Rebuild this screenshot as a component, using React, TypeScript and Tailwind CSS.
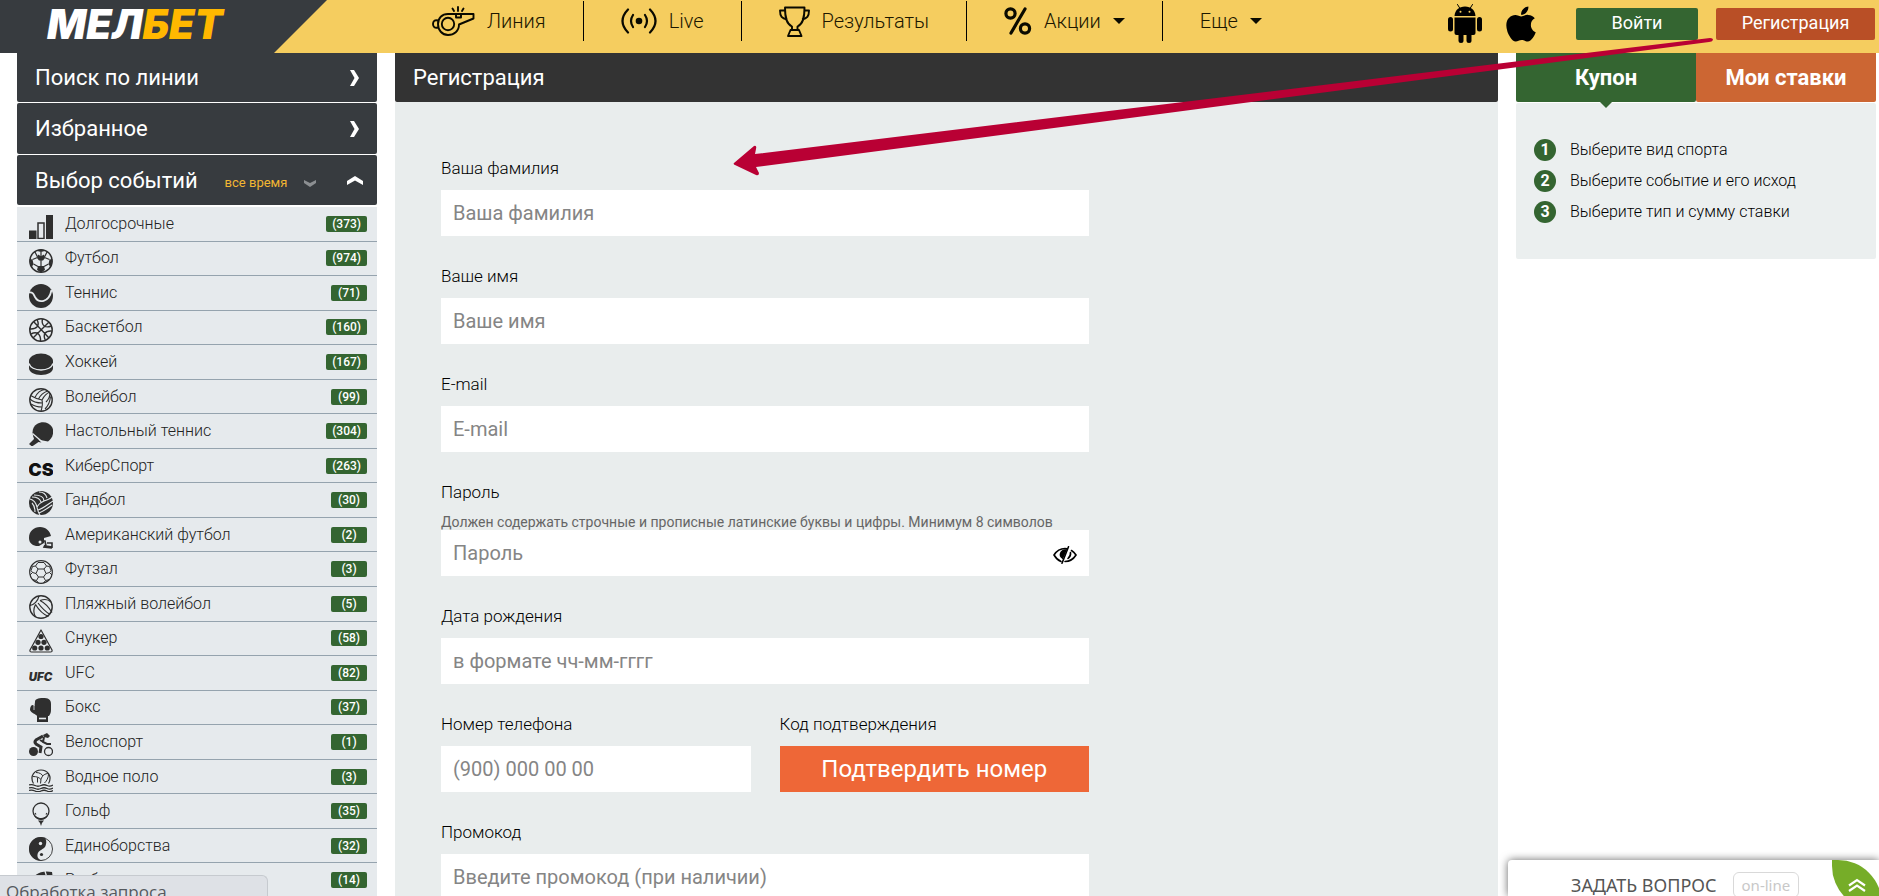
import type { ReactNode } from "react";
import { FaApple } from "react-icons/fa";

const INK = "#2f2f2f";

function Icon({ children }: { children: ReactNode }) {
  return (
    <svg viewBox="0 0 24 24" className="mt-[6px] h-6 w-6 shrink-0" fill={INK} stroke="none" aria-hidden="true">
      {children}
    </svg>
  );
}

const line = { fill: "none", stroke: INK, strokeWidth: 1.2 };
const cut = { fill: "none", stroke: "#e6eaed", strokeWidth: 1.3 };

const sports: { name: string; count: number; icon: ReactNode }[] = [
  {
    name: "Долгосрочные",
    count: 373,
    icon: (
      <>
        <path d="M0 15.500h7.500V24H0zM17 0h7v24h-7z" />
        <rect x="9" y="8" width="6" height="15.500" fill="none" stroke={INK} strokeWidth="1.500" />
      </>
    ),
  },
  {
    name: "Футбол",
    count: 974,
    icon: (
      <>
        <circle cx="12" cy="12" r="11.200" {...line} strokeWidth={1.5} />
        <path d="M9 5.500l3 1.800 3-1.800 1 3.500-2 2.500h-4l-2-2.500z" />
        <path d="M9 17h6l1 4-4 2.500L8 21zM6.500 1.500L12 3l5.500-1.500-5.500-1zM0.500 10l3 .5 1 4.500-2 3.500zM23.500 10l-3 .5-1 4.500 2 3.500z" />
        <path d="M12 3v5M3.500 10.500l5-2M20.500 10.500l-5-2M4.500 15l4.500 2.500M19.500 15L15 17.500M12 11v6M6 3l2.500 5M18 3l-2.500 5" {...line} />
      </>
    ),
  },
  {
    name: "Теннис",
    count: 71,
    icon: (
      <>
        <circle cx="12" cy="12" r="12" />
        <path d="M0 8.500c3.500-1 4.500 1.500 6 4.500 3.500 6.500 14 6 16.500-7" {...cut} strokeWidth={1.8} />
      </>
    ),
  },
  {
    name: "Баскетбол",
    count: 160,
    icon: (
      <>
        <circle cx="12" cy="12" r="11.200" {...line} strokeWidth={1.5} />
        <path d="M4.500 3.500L20 20M20 4L4 20M8 1.500c3 6 0 10-7.500 9.500M2 16c6-3 10 0 9.500 7.500M13.500 1C12 7 16 10.500 22.500 8M22.800 13c-7-.5-9 4-6.500 9" {...line} strokeWidth={1.4} />
      </>
    ),
  },
  {
    name: "Хоккей",
    count: 167,
    icon: (
      <>
        <path d="M0 8v7c0 4 5 7 12 7s12-3 12-7V8z" />
        <ellipse cx="12" cy="8" rx="12" ry="7.500" />
        <path d="M0 10.500c1 4 6 6.500 12 6.500s11-2.500 12-6.500" {...cut} />
      </>
    ),
  },
  {
    name: "Волейбол",
    count: 99,
    icon: (
      <>
        <circle cx="12" cy="12" r="11.200" {...line} strokeWidth={1.4} />
        <path d="M13 12C8 11 4 9 1.500 7.500M13 12c2-4 5-7 8-8M13 12c1 4 0 8-1 11M1 11c3 3 7 4 12 4M2 16c3 2 7 3 11 3M6 9.500C8 5 12 2 16 1.500M9.500 11c2-4 5-6.500 9-8M17 14c3-3 4-6 4-9M16 21c3-3 5-7 5.500-12.500" {...line} strokeWidth={1.1} />
      </>
    ),
  },
  {
    name: "Настольный теннис",
    count: 304,
    icon: (
      <>
        <path d="M6 17C2 12 3 5 8 2s12-2 15 3 0 12-4 14.500z" />
        <path d="M4 12.500l8.500 8-3-.5L3 24.500 0 22l5-5z" />
        <path d="M3.500 11.500l10.500 9" {...cut} />
      </>
    ),
  },
  {
    name: "КиберСпорт",
    count: 263,
    icon: (
      <text x="12" y="19" textAnchor="middle" fontFamily="Inter, sans-serif" fontWeight="900" fontSize="18" fill="#111">
        CS
      </text>
    ),
  },
  {
    name: "Гандбол",
    count: 30,
    icon: (
      <>
        <circle cx="12" cy="12" r="12" />
        <path d="M1 8c4 1 6 4 7 8 .5 3 1 5 3 8M5 4c6 0 10 2 10 6-3 1-5 3-7 6M15 10c3-1 6-2 8-4M10 1c4 0 7 2 8 6M9 19c4-1 9-5 15-9M10 22c5-2 9-5 13-8M3 12c2 2 3 5 3 9M3 6c5 0 8 2 9 5" {...cut} strokeWidth={1.1} />
      </>
    ),
  },
  {
    name: "Американский футбол",
    count: 2,
    icon: (
      <>
        <path d="M0 12C0 5 5 1 11 1c6 0 10 4 11 9l-7 2v5l-5 3H7l-3-1c-3-2-4-4-4-7z" />
        <circle cx="11" cy="16" r="1.500" fill="#e6eaed" />
        <path d="M13 15h3l1 5 6 1v-4h-5M16 19l-1 2 8 1" {...line} strokeWidth={1.6} />
      </>
    ),
  },
  {
    name: "Футзал",
    count: 3,
    icon: (
      <>
        <circle cx="12" cy="12" r="11.300" {...line} />
        <path d="M9 9h6l2 4.500-2.500 3.500h-5L7 13.500zM9 9L6.500 6 9 2.500h6L17.500 6 15 9M17 13.500l3.500-1L23 15M17.500 6l3 .5 1.500 4-1.500 2M7 13.500l-3.500-1L1 15M6.500 6l-3 .5L2 10.500l1.500 2M9.500 17l-2 3.500L9.500 23M14.500 17l2 3.500-2 2.500M7.500 20.500l-4-1M16.500 20.500l4-1" {...line} strokeWidth={1} />
      </>
    ),
  },
  {
    name: "Пляжный волейбол",
    count: 5,
    icon: (
      <>
        <circle cx="12" cy="12" r="11.200" {...line} strokeWidth={1.4} />
        <path d="M1 10.500C5 10 9 6 10 1M11 5.500c4 2 9 7 12 12M6.500 9.500c3 5 8 10 13 12M9 8c3 4 8 9 12 11.500M6.500 9.500c-2 4-2 9 0 12.500M11 5.500c4-1.500 8-1.500 11 1.500" {...line} strokeWidth={1.2} />
      </>
    ),
  },
  {
    name: "Снукер",
    count: 58,
    icon: (
      <>
        <path d="M12 1L23 21q.5 2-1.500 2h-19Q.5 23 1 21z" {...line} strokeLinejoin="round" />
        <circle cx="12" cy="7.500" r="2.600" />
        <circle cx="9" cy="13.300" r="2.600" />
        <circle cx="15" cy="13.300" r="2.600" />
        <circle cx="5.700" cy="19" r="2.600" />
        <circle cx="12" cy="19" r="2.600" />
        <circle cx="18.300" cy="19" r="2.600" />
      </>
    ),
  },
  {
    name: "UFC",
    count: 82,
    icon: (
      <text x="11.500" y="17" textAnchor="middle" fontFamily="Inter, sans-serif" fontWeight="900" fontStyle="italic" fontSize="11.500" fill={INK}>
        UFC
      </text>
    ),
  },
  {
    name: "Бокс",
    count: 37,
    icon: (
      <>
        <path d="M6 4c0-3 3-4 8-4s8 1 8 6v6c0 3-1 4-2 6H8c-1-2-6-3-7-6 0-3 1-5 3-5l1.500 1z" />
        <path d="M8 18h11v6H8z" />
        <path d="M10 20.500h7" {...cut} strokeWidth={1.6} />
        <path d="M5 7v5" {...cut} strokeWidth={0.8} />
      </>
    ),
  },
  {
    name: "Велоспорт",
    count: 1,
    icon: (
      <>
        <circle cx="4.500" cy="18.500" r="4.500" />
        <circle cx="19.500" cy="18.500" r="4" {...line} strokeWidth={1.3} />
        <path d="M14 2l4-2 3 3-2 2-4-1z" />
        <path d="M14 3L7 7q-2 2 0 4l5 3-1 6" fill="none" stroke={INK} strokeWidth="3" />
        <path d="M15 4l-1 5 4 2h4M11 7l5 3" fill="none" stroke={INK} strokeWidth="2" />
      </>
    ),
  },
  {
    name: "Водное поло",
    count: 3,
    icon: (
      <>
        <path d="M4.500 15.500C0 8 6 2 12 2s12 6 7.500 13.500" {...line} />
        <path d="M4 8.500c4 0 6 1 8 3l-.5 4M12 11.500c1-4 4-6 7.500-6M7 4.500c4 0 6 2 7 3.500M15.500 15c2-2 4-5 4-9M8.500 9.500v5" {...line} strokeWidth={1} />
        <path d="M0 17q3-1 6 .5t6 0 6 0 6-.5M0 20q3-1 6 .5t6 0 6 0 6-.5M0 22.500q3-1 6 .5t6 0 6 0 6-.5" {...line} strokeWidth={1.3} />
      </>
    ),
  },
  {
    name: "Гольф",
    count: 35,
    icon: (
      <>
        <circle cx="12" cy="9" r="8" {...line} strokeWidth={1.3} />
        <path d="M4 11c3 4 5 5 8 5s6-2 8-5c-1 4-4 7-8 7s-7-3-8-7zM9 18.500h6l-2 2.500-1 3-1-3z" />
        <path d="M6 11l1 1.500M17 12.500l1-1.500" {...line} />
      </>
    ),
  },
  {
    name: "Единоборства",
    count: 32,
    icon: (
      <>
        <circle cx="12" cy="12" r="11.500" {...line} strokeWidth={0.9} />
        <path d="M16 .7C6-2 0 5 0 12s6 13 15 11.500c-5 0-7-3-6.500-6C9 13 15 12.500 16.500 9 18 5 17 2 16 .7z" />
        <circle cx="11.500" cy="6.500" r="1.700" fill="#e6eaed" />
        <circle cx="12.500" cy="17.500" r="1.600" />
      </>
    ),
  },
  {
    name: "Регби",
    count: 14,
    icon: (
      <>
        <path d="M2 12C4 3 12-1 23 1c2 10-2 19-12 22-7 1-10-3-9-11z" />
        <path d="M16 0l2 7" {...cut} />
      </>
    ),
  },
];

function Whistle() {
  return (
    <svg viewBox="0 0 43 30" className="h-[30px] w-[43px]" fill="none" stroke="#0a0a00" strokeWidth="1.900" strokeLinejoin="round" strokeLinecap="round" aria-hidden="true">
      <circle cx="16" cy="18" r="6.200" />
      <path d="M23 8h18.500v4.500L27 18.500C27 25 22 29 16 29S6 24 6 18 10 8 16 8h8v3.500h5V8" />
      <path d="M6 14.500C3 13.500 1 15 1 18s2 4.500 5 3.500M26 5V1M22 5l-1.500-2.500M30 5l1.500-2.500" />
    </svg>
  );
}

function Broadcast() {
  return (
    <svg viewBox="0 0 36 26" className="h-[26px] w-9" fill="none" stroke="#0a0a00" strokeWidth="2.200" strokeLinecap="round" aria-hidden="true">
      <circle cx="18" cy="13" r="3.300" fill="#0a0a00" stroke="none" />
      <path d="M12 7Q8 13 12 19M24 7q4 6 0 12M7 1.500Q-4 13 7 24.500M29 1.500Q40 13 29 24.500" />
    </svg>
  );
}

function Trophy() {
  return (
    <svg viewBox="0 0 31 31" className="h-[31px] w-[31px]" fill="none" stroke="#0a0a00" strokeWidth="1.900" strokeLinejoin="round" aria-hidden="true">
      <path d="M6 1.500h19.500C25.500 12 24 18 18.500 20.500V24h-5.500v-3.500C7.500 18 6 12 6 1.500z" />
      <path d="M6 4.500H1c0 6 2 8 7 9M25 4.500h5c0 6-2 8-7 9M11.500 24h8.500l2.500 6H9z" />
    </svg>
  );
}

function Percent() {
  return (
    <svg viewBox="0 0 28 28" className="h-7 w-7" fill="none" stroke="#0a0a00" strokeWidth="3.200" strokeLinecap="round" aria-hidden="true">
      <circle cx="6.500" cy="6.500" r="4.600" />
      <circle cx="21" cy="21.500" r="4.600" />
      <path d="M21 2L7 26" />
    </svg>
  );
}

function Caret() {
  return (
    <svg viewBox="0 0 12 6" className="h-[6px] w-3" fill="#0a0a00" aria-hidden="true">
      <path d="M0 0h12L6 6z" />
    </svg>
  );
}

function Android() {
  return (
    <svg viewBox="0 0 34 39" className="h-[39px] w-[34px]" fill="#000" aria-hidden="true">
      <path d="M6.500 12C7 6 11 2.500 17 2.500S27 6 27.500 12z" />
      <path d="M12 4.500L9.500.5M22 4.500L24.500.5" stroke="#000" strokeWidth="1" strokeLinecap="round" />
      <circle cx="12.500" cy="7.800" r="1" fill="#f5cd5f" />
      <circle cx="21.500" cy="7.800" r="1" fill="#f5cd5f" />
      <path d="M6.500 13.500h21V29q0 2-2 2h-17q-2 0-2-2z" />
      <rect x="0" y="13" width="5" height="14.500" rx="2.500" />
      <rect x="29" y="13" width="5" height="14.500" rx="2.500" />
      <rect x="10.500" y="26" width="5" height="13" rx="2.500" />
      <rect x="18.500" y="26" width="5" height="13" rx="2.500" />
    </svg>
  );
}

const navItem = "flex h-10 items-center gap-3 px-[37px] text-xl font-light text-[#1c1700]";

function Header() {
  return (
    <header className="flex h-[53px] shrink-0 bg-[#f5cd5f]">
      <a href="#" className="h-[53px] w-[327px] shrink-0 bg-[#373b3f] pl-[47px] [clip-path:polygon(0_0,100%_0,274px_100%,0_100%)]">
        <span className="font-[Inter,sans-serif] text-[41px] leading-[48px] font-black text-white italic">
          МЕЛ<span className="text-[#ffb800]">БЕТ</span>
        </span>
      </a>
      <nav className="ml-[68px] flex pt-px whitespace-nowrap">
        <a href="#" className={navItem}>
          <Whistle />
          Линия
        </a>
        <a href="#" className={`${navItem} border-l border-black`}>
          <Broadcast />
          Live
        </a>
        <a href="#" className={`${navItem} border-l border-black`}>
          <Trophy />
          Результаты
        </a>
        <button type="button" className={`${navItem} border-l border-black`}>
          <Percent />
          Акции
          <Caret />
        </button>
        <button type="button" className={`${navItem} border-l border-black`}>
          Еще
          <Caret />
        </button>
      </nav>
      <div className="ml-auto flex items-start pr-1">
        <a href="#" aria-label="Android" className="mt-1">
          <Android />
        </a>
        <a href="#" aria-label="iOS" className="mt-1 mr-[36px] ml-[20px]">
          <FaApple className="h-[40px] w-[38px] text-black" />
        </a>
        <button type="button" className="mt-2 h-8 w-[122px] rounded-xs bg-[#346531] pb-[2px] text-lg text-white">
          Войти
        </button>
        <button type="button" className="mt-2 ml-[18px] h-8 w-[159px] rounded-xs bg-[#b94f26] pb-[2px] text-lg text-white">
          Регистрация
        </button>
      </div>
    </header>
  );
}

function ChevronRight() {
  return (
    <svg viewBox="0 0 9 16" className="h-4 w-[9px]" fill="#fff" aria-hidden="true">
      <path d="M0 0h4l5 8-5 8H0l4.500-8z" />
    </svg>
  );
}

const bar = "flex items-center rounded-b-xs bg-[#373b3f] pl-[18px] text-[22px] text-white";

function Sidebar() {
  return (
    <aside className="w-[360px] shrink-0">
      <button type="button" className={`${bar} h-[49px] w-full justify-between pr-[18px]`}>
        Поиск по линии
        <ChevronRight />
      </button>
      <button type="button" className={`${bar} mt-px h-[51px] w-full justify-between rounded-t-xs pr-[18px]`}>
        Избранное
        <ChevronRight />
      </button>
      <div className={`${bar} mt-px h-[50px] rounded-t-xs pr-[14px]`}>
        <h2>Выбор событий</h2>
        <label className="ml-[27px] flex items-center pt-[6px]">
          <span className="sr-only">Период</span>
          <select className="appearance-none bg-transparent text-[13px] leading-5 text-[#f2b632]">
            <option>все время</option>
          </select>
          <svg viewBox="0 0 12 7" className="ml-4 h-[7px] w-3" fill="#8c8f92" aria-hidden="true">
            <path d="M0 0l6 3 6-3v3L6 7 0 3z" />
          </svg>
        </label>
        <svg viewBox="0 0 16 9" className="ml-auto h-[9px] w-4" fill="#fff" aria-hidden="true">
          <path d="M0 9l8-4.500L16 9V5L8 0 0 5z" />
        </svg>
      </div>
      <ul className="mt-[2px] grid h-[691px] auto-rows-fr bg-[#e6eaed]">
        {sports.map((s) => (
          <li key={s.name} className="border-b border-[#95a3ae]">
            <a href="#" className="flex h-full items-center pr-[10px] pl-3">
              <Icon>{s.icon}</Icon>
              <span className="ml-3 text-base font-light text-[#222]">{s.name}</span>
              <span className="ml-auto min-w-9 rounded-xs bg-[#346531] px-[6px] text-center text-xs leading-4 font-medium text-white">
                ({s.count})
              </span>
            </a>
          </li>
        ))}
      </ul>
    </aside>
  );
}

const label = "block h-[62px] pt-[30px] text-[17px] leading-5 font-light text-black";
const field = "block h-[46px] w-full bg-white px-3 text-xl text-[#333] outline-none placeholder:text-[#858585]";

function Field({ id, title, placeholder, type = "text" }: { id: string; title: string; placeholder: string; type?: string }) {
  return (
    <div>
      <label htmlFor={id} className={label}>
        {title}
      </label>
      <input id={id} type={type} placeholder={placeholder} className={field} />
    </div>
  );
}

function Registration() {
  return (
    <main className="flex min-w-0 flex-1 flex-col">
      <h1 className="flex h-[49px] shrink-0 items-center rounded-b-xs bg-[#333] pl-[18px] text-[22px] text-white">Регистрация</h1>
      <form className="flex-1 bg-[#e9eded] px-[46px] pt-[26px]">
        <div className="max-w-[648px]">
          <Field id="surname" title="Ваша фамилия" placeholder="Ваша фамилия" />
          <Field id="name" title="Ваше имя" placeholder="Ваше имя" />
          <Field id="email" title="E-mail" placeholder="E-mail" type="email" />
          <div>
            <label htmlFor="password" className={label}>
              Пароль
            </label>
            <p className="h-4 text-sm leading-4 text-[#666]">
              Должен содержать строчные и прописные латинские буквы и цифры. Минимум 8 символов
            </p>
            <div className="flex items-center bg-white pr-3">
              <input id="password" type="password" placeholder="Пароль" className={field} />
              <button type="button" aria-label="Показать пароль" className="mt-1">
                <svg viewBox="0 0 24 18" className="h-[18px] w-6" fill="none" stroke="#000" strokeWidth="1.600" strokeLinecap="round" aria-hidden="true">
                  <path d="M8 15.500C4.500 14 2.500 11.500 1 9c2.500-4 6-6.500 11-6.500l2 .2M18.500 4.500C20.500 5.700 22 7.500 23 9c-2.500 4-6.500 6.500-11 6.500" />
                  <path d="M15.500.8L9 17.200" />
                  <path d="M13 4L9.500 12C6 10 7 4 13 4z" fill="#000" />
                  <path d="M17.500 6.500Q18 10 15 12.500" />
                </svg>
              </button>
            </div>
          </div>
          <Field id="birth" title="Дата рождения" placeholder="в формате чч-мм-гггг" />
          <div className="grid grid-cols-2 gap-[29px]">
            <Field id="phone" title="Номер телефона" placeholder="(900) 000 00 00" type="tel" />
            <div>
              <label htmlFor="confirm" className={label}>
                Код подтверждения
              </label>
              <button id="confirm" type="button" className="h-[46px] w-full bg-[#ee6737] text-2xl text-white">
                Подтвердить номер
              </button>
            </div>
          </div>
          <Field id="promo" title="Промокод" placeholder="Введите промокод (при наличии)" />
        </div>
      </form>
    </main>
  );
}

const steps = ["Выберите вид спорта", "Выберите событие и его исход", "Выберите тип и сумму ставки"];

function Coupon() {
  return (
    <aside className="w-[360px] shrink-0">
      <div className="grid grid-cols-2 text-[22px] font-bold text-white">
        <button type="button" className="relative h-[49px] rounded-b-xs bg-[#346531]">
          Купон
          <svg viewBox="0 0 12 6" className="absolute top-full left-1/2 h-[6px] w-3 -translate-x-1/2" fill="#346531" aria-hidden="true">
            <path d="M0 0h12L6 6z" />
          </svg>
        </button>
        <button type="button" className="h-[49px] rounded-b-xs bg-[#cc6633]">
          Мои ставки
        </button>
      </div>
      <ol className="mt-px flex flex-col gap-[9px] rounded-xs bg-[#ebefef] px-[18px] py-9">
        {steps.map((s, i) => (
          <li key={s} className="flex items-center gap-[14px] text-base leading-[22px] font-light text-black">
            <span className="flex h-[22px] w-[22px] items-center justify-center rounded-full bg-[#346531] font-bold text-white">
              {i + 1}
            </span>
            {s}
          </li>
        ))}
      </ol>
    </aside>
  );
}

export default function App() {
  return (
    <div className="relative flex h-screen flex-col overflow-hidden bg-white font-[Roboto,sans-serif]">
      <Header />
      <div className="flex min-h-0 flex-1 gap-[18px] pr-[3px] pl-[17px]">
        <Sidebar />
        <Registration />
        <Coupon />
      </div>

      <svg viewBox="0 0 980 140" className="pointer-events-none absolute top-[37px] left-[733px] h-[140px] w-[980px]" fill="#b90034" aria-hidden="true">
        <path d="M1 126L21 109Q24 108 23 112L22 117L977 1Q980 1 980 3Q979 5 976 5L23 130L26 136Q26 139 23 138L2 128Q0 127 1 126z" />
      </svg>

      <div className="absolute bottom-0 left-0 h-[21px] w-[268px] overflow-hidden rounded-tr-md border-t border-r border-[#c6cacf] bg-[#dee1e6] pt-1 pl-[6px] font-['Open_Sans',sans-serif] text-[17px] leading-6 text-[#55595e]">
        Обработка запроса...
      </div>

      <div className="absolute right-0 bottom-0 flex h-9 w-[371px] items-start overflow-hidden rounded-tl-sm bg-white pl-[63px] shadow-[0_0_8px_rgba(0,0,0,0.6)]">
        <a href="#" className="mt-3 flex items-center gap-4 font-['Noto_Sans',sans-serif] text-lg leading-[26px] whitespace-nowrap text-[#555]">
          ЗАДАТЬ ВОПРОС
          <span className="rounded-md border border-[#d9d9d9] px-2 text-[15px] leading-6 text-[#c8c8c8]">on-line</span>
        </a>
        <button type="button" aria-label="Развернуть" className="absolute top-0 right-[-3px] flex h-[50px] w-[50px] items-center justify-center rounded-tr-[44px] rounded-bl-[44px] bg-[#76ad28]">
          <svg viewBox="0 0 18 14" className="h-[14px] w-[18px]" fill="none" stroke="#fff" strokeWidth="2.200" aria-hidden="true">
            <path d="M1 7.500L9 2l8 5.500M1 13l8-5.500 8 5.500" />
          </svg>
        </button>
      </div>
    </div>
  );
}
